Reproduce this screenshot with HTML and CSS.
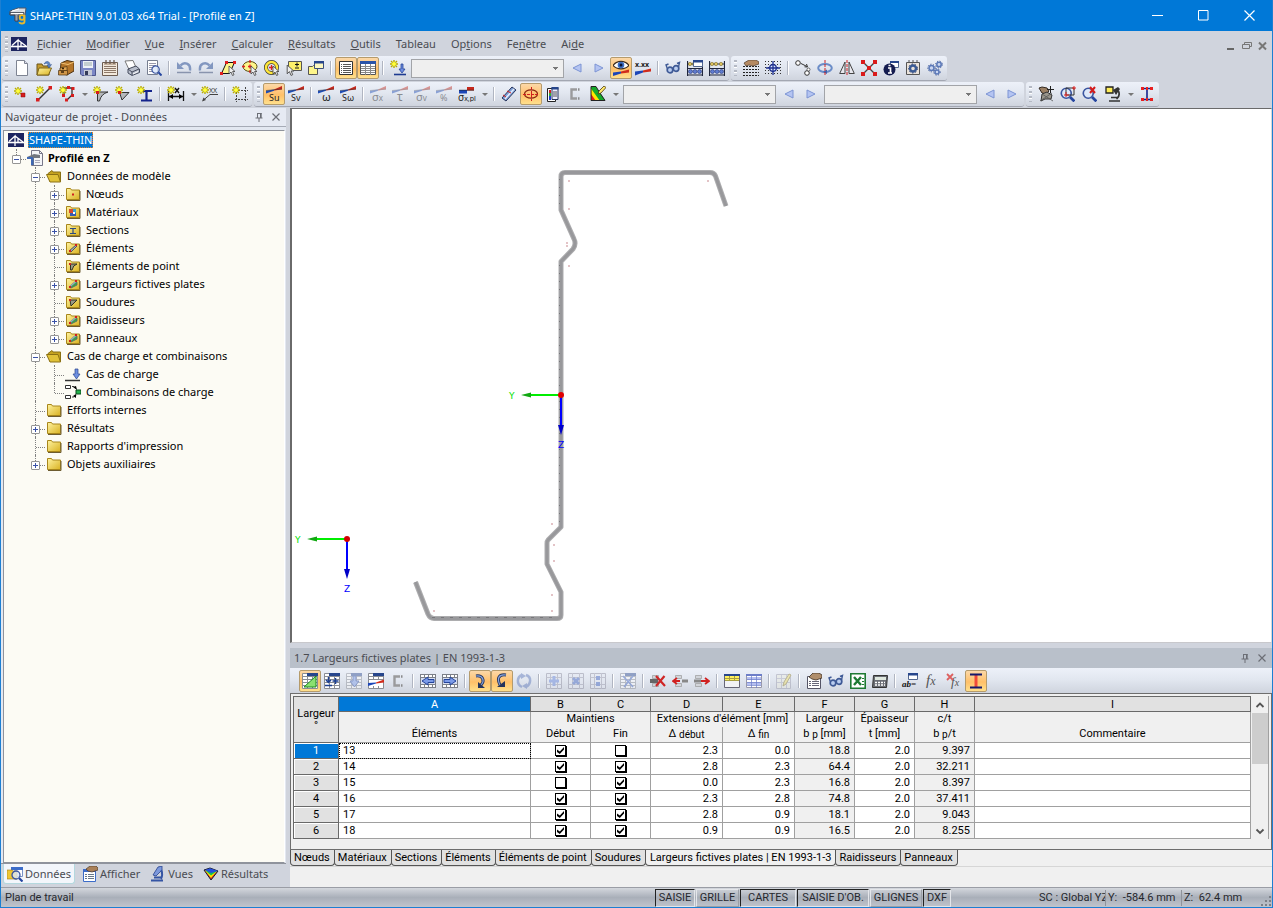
FILE: index.html
```html
<!DOCTYPE html>
<html lang="fr">
<head>
<meta charset="utf-8">
<title>SHAPE-THIN 9.01.03 x64 Trial - [Profilé en Z]</title>
<link rel="stylesheet" href="styles.css">
</head>
<body>
<svg class="defs" aria-hidden="true">
  <defs>
    <linearGradient id="gFold" x2="1" y2="1"><stop offset="0" stop-color="#fff3a0"/><stop offset="1" stop-color="#d9b222"/></linearGradient>
  </defs>
  <symbol id="star" viewBox="0 0 8 8"><path d="M4 0v8M0 4h8M1 1l6 6M7 1l-6 6" stroke="#b8ac00" stroke-width="1.4"/><circle cx="4" cy="4" r="2" fill="#ffff3a"/></symbol>
  <symbol id="cursor" viewBox="0 0 8 10"><path d="M1 0v8l2-2 1.500 3.500 1.500-.7L4.600 5.500H7z" fill="#eee" stroke="#444" stroke-width=".8"/></symbol>
  <symbol id="wedge" viewBox="0 0 18 8"><path d="M1 7.500V4.800L9 3.500v1.200z" fill="#1f4cb4"/><path d="M9 3.500L17 0v3.500L9 4.500z" fill="#c5281c"/><path d="M1 4.500L17 3" stroke="#333" stroke-width=".5"/></symbol>
  <symbol id="tbl" viewBox="0 0 16 16"><path d="M.5.500h15v15H.5z" fill="#fff" stroke="#8a8d94"/><path d="M.5 3.500h15M.5 6.500h15M.5 9.500h15M.5 12.500h15M5.500 3v13M10.500 3v13" stroke="#8a8d94"/><path d="M5 0h11v3H5z" fill="#27468c"/></symbol>
  <symbol id="film" viewBox="0 0 16 16"><path d="M0 1h16v14H0z" fill="#7c8088"/><path d="M1 2h3v2H1zM5 2h3v2H5zM9 2h3v2H9zM13 2h2v2h-2zM1 12h3v2H1zM5 12h3v2H5zM9 12h3v2H9zM13 12h2v2h-2z" fill="#fff"/><path d="M1 5h14v6H1z" fill="#d5ddf0"/></symbol>
  <symbol id="mag" viewBox="0 0 12 12"><path d="M8 8l3.500 3.500" stroke="#2646a0" stroke-width="2.200"/><circle cx="5" cy="5" r="4" fill="#dce9fb" fill-opacity=".8" stroke="#3a55a0" stroke-width="1.300"/></symbol>

  <symbol id="bridge" viewBox="0 0 16 14"><path d="M0 0h16v14H0z" fill="#1d2560"/><path d="M0 9.500h16" stroke="#fff" stroke-width="1.600"/><path d="M1 8.500L7 3v10M7 3l8 6M10 5v4" stroke="#fff" fill="none" stroke-width="1.300"/></symbol>
  <symbol id="new" viewBox="0 0 16 16"><path d="M2.500.5h8l3 3v12h-11z" fill="#fff" stroke="#7e8492"/><path d="M10.500.5v3h3" fill="#dde" stroke="#7e8492"/></symbol>
  <symbol id="open" viewBox="0 0 16 16"><path d="M1 4h5l1 2h6v9H1z" fill="#c69c2e" stroke="#6b5518"/><path d="M3 8h12.500l-3 7H1z" fill="url(#gFold)" stroke="#7d651a"/><path d="M8 4c2-4 6-3 6 1l1.500-.5L13 8l-2-3h1.500C12 3 10 3 8 4z" fill="#5a86c8" stroke="#2b4c86" stroke-width=".5"/></symbol>
  <symbol id="cabinet" viewBox="0 0 16 16"><path d="M3 3l6-2.500 7 1.500v9l-7 4-7-2z" fill="#b5762a" stroke="#4a3010"/><path d="M3 3l7 1.500 6-2.500" stroke="#f2c377" fill="none"/><path d="M2 8l7-1.500v4H2z" fill="#e0a552" stroke="#4a3010" stroke-width=".7"/><path d="M.5 10.500h9v4.500h-9z" fill="#d09648" stroke="#4a3010" stroke-width=".7"/><path d="M3 12h3M4 8.500h2" stroke="#3a2408" stroke-width="1.300"/></symbol>
  <symbol id="save" viewBox="0 0 16 16"><path d="M.5.5h15v15H2l-1.500-1.500z" fill="#7c87c6" stroke="#4d568c"/><path d="M3 1h10v7H3z" fill="#eef1f7"/><path d="M4 3h8M4 5h8" stroke="#9aa"/><path d="M4 10h8v5.500H4z" fill="#c6cad6"/><path d="M5 11h3v4H5z" fill="#333a58"/></symbol>
  <symbol id="notes" viewBox="0 0 16 16"><path d="M.5 2.500h15v13H.5z" fill="#f3e9dc" stroke="#6d5c50"/><path d="M2 6.500h12M2 8.500h12M2 10.500h12M2 12.500h12" stroke="#8d7868"/><path d="M2 4h12" stroke="#b39b86" stroke-width="1.500"/><path d="M4 0v4M8 0v4M12 0v4" stroke="#6d5c50" stroke-width="1.300"/></symbol>
  <symbol id="print" viewBox="0 0 16 16"><path d="M1 1l8-.5 3 7-7 2z" fill="#fff" stroke="#777"/><path d="M4 9l8-3 3.500 3v3.500L8 15.500 4 13z" fill="#b9bfcc" stroke="#454b5c"/><path d="M4 9l4 3 7-3M8 12v3" stroke="#454b5c" fill="none"/><path d="M9 14l5-2.500" stroke="#fff"/></symbol>
  <symbol id="preview" viewBox="0 0 16 16"><path d="M1.500.5h10v14h-10z" fill="#fff" stroke="#777f90"/><path d="M3 3.500h7M3 5.500h7M3 7.500h4M3 9.500h3M3 11.500h3" stroke="#99a"/><use href="#mag" x="5" y="5" width="11" height="11"/></symbol>
  <symbol id="undo" viewBox="0 0 16 16"><path d="M4.500 5.500C8 1.500 15 3 14 10.500" fill="none" stroke="#8297c0" stroke-width="2.400"/><path d="M1 2v7h7z" fill="#8297c0"/><path d="M1 12.500h14" stroke="#8994ad" stroke-width="1.500"/></symbol>
  <symbol id="redo" viewBox="0 0 16 16"><path d="M11.500 5.500C8 1.500 1 3 2 10.500" fill="none" stroke="#8297c0" stroke-width="2.400"/><path d="M15 2v7H8z" fill="#8297c0"/><path d="M1 12.500h14" stroke="#8994ad" stroke-width="1.500"/></symbol>
  <symbol id="selRect" viewBox="0 0 16 16"><path d="M1.500 13.500l5-11h8l-5 11z" fill="#fdf58a" stroke="#111"/><path d="M5 1h3v3H5zM13 1h3v3h-3zM0 12h3v3H0z" fill="#e02020"/><use href="#cursor" x="8" y="6" width="8" height="10"/></symbol>
  <symbol id="selEll" viewBox="0 0 16 16"><ellipse cx="8" cy="6.500" rx="7" ry="5" fill="#fdf58a" stroke="#5a4a10"/><path d="M8 4.500v4M6 6.500h4M0 6.500h3M8 0v3M8 10v3" stroke="#e02020" stroke-width="1.300"/><use href="#cursor" x="8" y="6" width="8" height="10"/></symbol>
  <symbol id="selRing" viewBox="0 0 16 16"><circle cx="7.500" cy="7.500" r="5.500" fill="none" stroke="#333" stroke-width="4"/><circle cx="7.500" cy="7.500" r="5.500" fill="none" stroke="#ffe73a" stroke-width="2.600"/><path d="M7.500 5v5M5 7.500h5" stroke="#e02020" stroke-width="1.300"/><use href="#cursor" x="8" y="6" width="8" height="10"/></symbol>
  <symbol id="selPlus" viewBox="0 0 16 16"><path d="M2.500 1.500h13v9h-13z" fill="#fdf06a" stroke="#555"/><path d="M11 2.500v4M9 4.500h4M9 8h4" stroke="#111"/><use href="#cursor" x="0" y="5" width="9" height="11"/></symbol>
  <symbol id="selWin" viewBox="0 0 16 16"><path d="M.5 6.500h4l1-1h4v9h-9z" fill="#fdf58a" stroke="#555"/><path d="M6.500 1.500h9v7h-9z" fill="#fdf8c0" stroke="#3c4f7c"/><path d="M6 1h10v2.500H6z" fill="#27468c"/></symbol>
  <symbol id="list" viewBox="0 0 16 16"><path d="M1.500 1.500h13v13h-13z" fill="#fff" stroke="#333"/><path d="M3 4.500h1M3 6.500h1M3 8.500h1M3 10.500h1M3 12.500h1M5 4.500h8M5 6.500h8M5 8.500h8M5 10.500h8M5 12.500h8" stroke="#555"/></symbol>
  <symbol id="table" viewBox="0 0 16 16"><path d="M.5 1.500h15v13H.5z" fill="#fff" stroke="#555"/><path d="M0 1h16v3H0z" fill="#2b54a8"/><path d="M1 6.500h14M1 8.500h14M1 10.500h14M1 12.500h14M5.500 4v11M10.500 4v11" stroke="#888"/></symbol>
  <symbol id="loadNew" viewBox="0 0 16 16"><use href="#star" width="8" height="8"/><path d="M11 4v5H9l3 4 3-4h-2V4z" fill="#6d8ce0" stroke="#24449a" stroke-width=".8"/><path d="M4 14.500h12" stroke="#1d3a90" stroke-width="1.600" fill="none"/></symbol>
  <symbol id="prev" viewBox="0 0 16 16"><path d="M12 4v8L4 8z" fill="#b4c4f2" stroke="#7c94d4"/></symbol>
  <symbol id="next" viewBox="0 0 16 16"><path d="M4 4v8l8-4z" fill="#b4c4f2" stroke="#7c94d4"/></symbol>
  <symbol id="eye" viewBox="0 0 16 16"><path d="M0 5.500C4 0 12 0 16 5.500 12 10 4 10 0 5.500z" fill="#fff" stroke="#3b2a1c" stroke-width="1.200"/><circle cx="8" cy="5" r="3.300" fill="#3a6cc0"/><circle cx="8" cy="5" r="1.500" fill="#0a1230"/><path d="M0 16v-3.500l8-1v2z" fill="#1c46b8"/><path d="M8 13.500v-2l8-2v3z" fill="#d02c1c"/></symbol>
  <symbol id="glasses" viewBox="0 0 16 16"><circle cx="5" cy="10" r="2.800" fill="#b9cdf0" stroke="#3f5a96" stroke-width="1.700"/><circle cx="11" cy="8.500" r="2.800" fill="#b9cdf0" stroke="#3f5a96" stroke-width="1.700"/><path d="M2.500 9L1 5l2.500-1M13.500 7l1-4.500-2.500 1" stroke="#3f5a96" stroke-width="1.400" fill="none"/></symbol>
  <symbol id="abacus" viewBox="0 0 16 16"><path d="M.5 1v15M15.500 1v15M0 8.500h16M0 15h16M0 4h16" stroke="#20263c" stroke-width="1.200"/><g fill="#dcc25c" stroke="#6c5c20" stroke-width=".5"><circle cx="3" cy="4" r="1.700"/><circle cx="7" cy="4" r="1.700"/><circle cx="12" cy="4" r="1.700"/></g><g fill="#5f7cd0" stroke="#26387c" stroke-width=".6"><circle cx="3.500" cy="11.500" r="2"/><circle cx="8" cy="11.500" r="2"/><circle cx="12.500" cy="11.500" r="2"/></g></symbol>
  <symbol id="abacusWin" viewBox="0 0 16 16"><use href="#abacus" width="16" height="16"/><path d="M6.500.5h9v6h-9z" fill="#fff" stroke="#53678f"/><path d="M6 0h10v2.500H6z" fill="#27468c"/></symbol>
  <symbol id="dots" viewBox="0 0 16 16"><path d="M0 1.500h16M0 4.500h16M0 7.500h16M0 10.500h16M0 13.500h16" stroke="#333" stroke-dasharray="1 2"/></symbol>
  <symbol id="gridHand" viewBox="0 0 16 16"><path d="M0 6.500h16M0 9.500h16M0 12.500h16M0 15.500h16" stroke="#222" stroke-dasharray="2 1"/><path d="M1 3l5-3h7l3 2v2l-6 2-4-1-3 1z" fill="#b58a62" stroke="#4c3a2a" stroke-width=".7"/></symbol>
  <symbol id="gridSnap" viewBox="0 0 16 16"><use href="#dots" width="16" height="16"/><circle cx="8" cy="8" r="3.300" fill="#dfe8ff" stroke="#1c2f90" stroke-width="1.300"/><path d="M8 1v14M1 8h14" stroke="#1c2f90" stroke-width="1.300"/></symbol>
  <symbol id="move" viewBox="0 0 16 16"><circle cx="3" cy="3" r="2.300" fill="#fff" stroke="#333"/><circle cx="12" cy="13" r="2.300" fill="#fff" stroke="#333"/><circle cx="13.500" cy="9.500" r="1.500" fill="#fff" stroke="#333" stroke-width=".7"/><path d="M6 3.500l6 3M12.500 7l-3-.2M12.500 7l-1-3" stroke="#333" fill="none"/></symbol>
  <symbol id="rotate" viewBox="0 0 16 16"><ellipse cx="8" cy="8" rx="6.800" ry="4" fill="none" stroke="#6a8cc8" stroke-width="2"/><path d="M10 9.500l-4 2.500 4 2z" fill="#3f64b0"/><path d="M8 0v16" stroke="#d02020" stroke-dasharray="3 1"/></symbol>
  <symbol id="mirror" viewBox="0 0 16 16"><path d="M6 2v11.500H.7zM10 2v11.500h5.300z" fill="#e8e8ee" stroke="#444"/><path d="M8 0v16" stroke="#d02020" stroke-dasharray="3 1"/></symbol>
  <symbol id="cross" viewBox="0 0 16 16"><path d="M2 2l12 12M14 2L2 14" stroke="#444" stroke-width="1.400"/><path d="M0 0h4v4H0zM12 0h4v4h-4zM0 12h4v4H0zM12 12h4v4h-4zM6 6h4v4H6z" fill="#da1a1a"/></symbol>
  <symbol id="info" viewBox="0 0 16 16"><path d="M7.500 1.500h8v6h-8z" fill="#fff" stroke="#53678f"/><path d="M7 1h9v2H7z" fill="#27468c"/><circle cx="6.500" cy="9.500" r="6" fill="#141c50"/><path d="M5 8h2.500v5M5 13h4M5.500 5.500h2" stroke="#fff" stroke-width="1.700" fill="none"/></symbol>
  <symbol id="gearNote" viewBox="0 0 16 16"><path d="M1.500 2.500h13v12h-13z" fill="#e9e2da" stroke="#555"/><path d="M4 0v3M8 0v3M12 0v3" stroke="#555"/><circle cx="8" cy="8.500" r="3" fill="none" stroke="#3a5a94" stroke-width="2.400"/><circle cx="8" cy="8.500" r="4.500" fill="none" stroke="#2d4270" stroke-dasharray="1.500 1.700"/></symbol>
  <symbol id="gears" viewBox="0 0 16 16"><g fill="#c9d6f0" stroke="#5a78b8" stroke-width="1.500"><circle cx="4.500" cy="8" r="2.500"/><circle cx="12" cy="4.500" r="2.200"/><circle cx="10" cy="12" r="2"/></g><g fill="none" stroke="#3f5a9a" stroke-dasharray="1.200 1.500"><circle cx="4.500" cy="8" r="3.800"/><circle cx="12" cy="4.500" r="3.400"/><circle cx="10" cy="12" r="3.200"/></g></symbol>

  <symbol id="nNode" viewBox="0 0 16 16"><use href="#star" width="8" height="8" y="1"/><path d="M7 7h4v4H7z" fill="#d81e1e" stroke="#8a0c0c" stroke-width=".5"/></symbol>
  <symbol id="nLine" viewBox="0 0 16 16"><use href="#star" width="8" height="8"/><path d="M2 14L14 2" stroke="#333" stroke-width="1.400"/><path d="M12.500 0H16v3.500h-3.500zM0 12h3.500v3.500H0z" fill="#d81e1e"/></symbol>
  <symbol id="nPoly" viewBox="0 0 16 16"><path d="M5 9V2h8v7l-5 5" stroke="#333" stroke-width="1.300" fill="none"/><use href="#star" width="8" height="8"/><path d="M8 0h3v3H8zM12.500 1h3v3h-3zM12 8h3v3h-3zM6 12.500h3v3H6zM3 8h3v3H3z" fill="#d81e1e"/></symbol>
  <symbol id="nCorner" viewBox="0 0 16 16"><path d="M4.500 15V6H15Q8 8 6.500 15z" fill="#b4b7bc" stroke="#333"/><use href="#star" width="8" height="8"/><path d="M3 5h3v3H3z" fill="#d81e1e"/></symbol>
  <symbol id="nWeld" viewBox="0 0 16 16"><path d="M4.500 6.500H14l-7 7.500z" fill="#b4b7bc" stroke="#333"/><use href="#star" width="8" height="8"/><path d="M3 5h3v3H3z" fill="#d81e1e"/></symbol>
  <symbol id="nBeam" viewBox="0 0 16 16"><path d="M4 5h11M4 14.500h11M9.500 5v10" stroke="#14248c" stroke-width="2.200"/><use href="#star" width="8" height="8"/></symbol>
  <symbol id="nGrid" viewBox="0 0 16 16"><path d="M3 4.500h13M3 13.500h13M4.500 3v13M13.500 1v15" stroke="#444" stroke-dasharray="2 1"/><use href="#star" width="8" height="8"/></symbol>
  <symbol id="plates" viewBox="0 0 16 16"><path d="M1 12L11 1l4 3L5 15z" fill="#7fa0d6" stroke="#26345c"/><path d="M4 13L13 3" stroke="#e7efff" stroke-width="1.500"/><path d="M2 9l3 2M6 5l4 2" stroke="#d02020"/></symbol>
  <symbol id="ellDim" viewBox="0 0 16 16"><ellipse cx="8" cy="8" rx="6.500" ry="4.200" fill="none" stroke="#8a2510" stroke-width="1.200"/><path d="M0 8.500h16M8.500 1v14" stroke="#d02020" stroke-dasharray="3 1"/></symbol>
  <symbol id="legend" viewBox="0 0 16 16"><path d="M2.500 2.500h8v13h-8z" fill="#fff" stroke="#222"/><path d="M4 4h2v3H4z" fill="#d02020"/><path d="M4 7h2v3H4z" fill="#30b030"/><path d="M4 10h2v4H4z" fill="#2040d0"/><path d="M7 1.500h6v12H7z" fill="#eef" stroke="#26345c"/><path d="M6.500 1h7v2.500h-7z" fill="#27468c"/><path d="M8 6h4M8 8h4M8 10h4" stroke="#555"/></symbol>
  <symbol id="channel" viewBox="0 0 16 16"><path d="M10 3.500H4.500v9H10" fill="none" stroke="#9a9a9c" stroke-width="2.400"/><path d="M11 3.500h1.500M11 12.500h1.500" stroke="#8a8a8c" stroke-width="2.400"/></symbol>
  <symbol id="rainbow" viewBox="0 0 16 16"><path d="M1 1h5l9 13v1H1z" fill="#16a82c"/><path d="M1 2.500L10 15H1z" fill="#ffe800"/><path d="M1 8l5 7H1z" fill="#e32020"/><path d="M1 .5h5l3 5 6 9H1z" fill="none" stroke="#222"/><path d="M8 8l1-3 5-5 2 1.500-5 5.500z" fill="#ffe86a" stroke="#4b3a10" stroke-width=".8"/></symbol>
  <symbol id="handDia" viewBox="0 0 16 16"><path d="M1 2l3-1 5 1 2 3-3 3-4-1z" fill="#9b8064" stroke="#332a22"/><path d="M12.500 0v7M9 3.500h7" stroke="#222"/><path d="M4 8l5-2 5 3-1 4H7L3 15z" fill="#9a968c" stroke="#333"/><path d="M2 15l12-8M4 8l11 7" stroke="#555" stroke-width=".8"/></symbol>
  <symbol id="zoomWin" viewBox="0 0 16 16"><use href="#mag" width="15" height="15" x="0" y="1"/><path d="M6 2h8v7H6z" fill="none" stroke="#333"/><path d="M6 6v5M4 9h5M14 0v4M12 2h4" stroke="#e02020"/></symbol>
  <symbol id="zoomX" viewBox="0 0 16 16"><use href="#mag" width="15" height="15" y="1"/><path d="M8 1l5 6M13 1L8 7" stroke="#d41c1c" stroke-width="2"/></symbol>
  <symbol id="scope" viewBox="0 0 16 16"><path d="M8 4l5-3 2 2-4 6z" fill="#333"/><path d="M13.500 5q2 5-2 8M4 15h11M6 11.500h7" stroke="#333" stroke-width="1.700" fill="none"/><path d="M1 1h7v6H1z" fill="#ffee58" stroke="#222" stroke-width="1.300"/></symbol>
  <symbol id="nodesI" viewBox="0 0 16 16"><path d="M2 2.500h12M2 13.500h12M8 2.500v11" stroke="#14248c" stroke-width="1.600"/><path d="M2 2.500h3M7 2.500h2M11 2.500h3M2 13.500h3M7 13.500h2M11 13.500h3" stroke="#e82020" stroke-width="3"/></symbol>

  <symbol id="folder" viewBox="0 0 16 16"><path d="M1.500 2.500h4l1 1.500h8v9.500h-13z" fill="url(#gFold)" stroke="#a8861a"/><path d="M2 14.500h13V5" stroke="#6d5c30" fill="none"/></symbol>
  <symbol id="folderOpen" viewBox="0 0 16 16"><path d="M2 5.500l4-3 1 1.500h7.500v9.500H4z" fill="#c5a220" stroke="#8a7012"/><path d="M.5 6.500H12l2.500 7.500H4z" fill="#e0c138" stroke="#8b7114"/></symbol>
  <symbol id="fNode" viewBox="0 0 16 16"><use href="#folder" width="16" height="16"/><path d="M7 7.500h2v2H7z" fill="#d02020"/></symbol>
  <symbol id="fMat" viewBox="0 0 16 16"><use href="#folder" width="16" height="16"/><path d="M4 5h4v4H4z" fill="#d84a30"/><path d="M8 5h3v4H8z" fill="#3aa0d0"/><path d="M5 9h6v3H5z" fill="#365ab0"/><path d="M8 8h2v2H8z" fill="#fff"/></symbol>
  <symbol id="fSec" viewBox="0 0 16 16"><use href="#folder" width="16" height="16"/><path d="M5 6.500h6M5 11.500h6M8 6v5" stroke="#2a4a80" stroke-width="1.200"/></symbol>
  <symbol id="fEl" viewBox="0 0 16 16"><use href="#folder" width="16" height="16"/><path d="M4 11l7-6 1 1-6 6z" fill="#9ab" stroke="#555"/><path d="M10 4h2v2h-2zM4 10h2v2H4z" fill="#d02020"/></symbol>
  <symbol id="fPt" viewBox="0 0 16 16"><use href="#folder" width="16" height="16"/><path d="M5.500 12V6H12Q8 7 7 12z" fill="#998" stroke="#332"/><path d="M4 5h2v2H4z" fill="#d02020"/></symbol>
  <symbol id="fWeld" viewBox="0 0 16 16"><use href="#folder" width="16" height="16"/><path d="M5 6h7l-6 6z" fill="#998" stroke="#332"/><path d="M4 5h2v2H4z" fill="#d02020"/></symbol>
  <symbol id="fGr" viewBox="0 0 16 16"><use href="#folder" width="16" height="16"/><path d="M4 11l7-6 1 1v3l-6 3z" fill="#3aa050" stroke="#566" stroke-width=".8"/><path d="M5 10.500l6-5" stroke="#9ab" stroke-width="1.500"/><path d="M10 4h2v2h-2zM4 10h2v2H4z" fill="#d02020"/></symbol>
  <symbol id="docBeam" viewBox="0 0 16 16"><path d="M4.500.5h8l3 3v12h-11z" fill="#f4f5f8" stroke="#778"/><path d="M12.500.5v3h3" stroke="#778" fill="none"/><path d="M8 10.500h5M8 12.500h5" stroke="#aab"/><path d="M0 7l7-3 6 1v3H7v7H4V9H0z" fill="#72767e"/><path d="M0 7h6v2H0zM4 8h2.500v7H4z" fill="#3f68b4"/></symbol>
  <symbol id="load" viewBox="0 0 16 16"><path d="M10 3h3v5h2l-3.500 5L8 8h2z" fill="#6f90e0" stroke="#2a468c" stroke-width=".7"/><path d="M0 14.500h15" stroke="#333" stroke-width="1.500"/></symbol>
  <symbol id="combi" viewBox="0 0 16 16"><path d="M.5 1.500h5v3h-5zM.5 11.500h5v3h-5z" fill="#fff" stroke="#333"/><path d="M7 2.500h1c2 0 3 1 3 3M7 13h1c2 0 3-1 3-3" fill="none" stroke="#333" stroke-dasharray="2 1"/><path d="M11 6h5v4h-5z" fill="#22b24a" stroke="#0c4a1c"/><path d="M8 3l4 3-1-4zM8 12l3 2 0-4z"/></symbol>
  <symbol id="navData" viewBox="0 0 16 16"><path d="M4.500 1.500h11v9h-11z" fill="#fff" stroke="#7a94c8"/><path d="M4 1h12v3H4z" fill="#3c6cc8"/><path d="M0 4h5l1 1h4v8H0z" fill="#efc734" stroke="#a07c10" stroke-width=".6"/><use href="#mag" x="4" y="4" width="12" height="12"/></symbol>
  <symbol id="navShow" viewBox="0 0 16 16"><path d="M1.500 3.500h12v12h-12z" fill="#fff" stroke="#3c6cc8"/><path d="M1 3h13v3H1z" fill="#3c6cc8"/><path d="M3 8.500h2M3 10.500h2M3 12.500h2M6 8.500h6M6 10.500h6M6 12.500h6" stroke="#678"/><path d="M4 3l4-3h6l2 2v2l-6 2-4-1z" fill="#a98058" stroke="#4c3a2a" stroke-width=".7"/></symbol>
  <symbol id="navView" viewBox="0 0 16 16"><path d="M8 1l4-1v4l-6 6-3-1z" fill="#7c98dc" stroke="#24408c" stroke-width=".8"/><path d="M1 14.500h12M4 11.500h7M11.500 4q1.500 5-.5 9" stroke="#3454a4" stroke-width="2" fill="none"/></symbol>
  <symbol id="navRes" viewBox="0 0 16 16"><path d="M1 4l6-2 8 3-7 9z" fill="#e02020" stroke="#123"/><path d="M2 4.500l12 .5-6 7z" fill="#ffe800"/><path d="M2 4.200l12 .8-6 4.500z" fill="#18c050"/><path d="M2 4l5-1.800L15 5 8 7z" fill="#2050e0"/></symbol>

  <symbol id="tTri" viewBox="0 0 16 16"><use href="#tbl" width="16" height="16"/><path d="M2 14L14 3v11z" fill="#8be070" stroke="#1c8a20"/></symbol>
  <symbol id="tAdd" viewBox="0 0 16 16"><use href="#tbl" width="16" height="16"/><path d="M4.500 4v5M2 7l2.500 2.500L7 7M11.500 5v6M8.500 8h6M1 12.500h7" stroke="#1c3f90" stroke-width="1.500" fill="none"/></symbol>
  <symbol id="tDown" viewBox="0 0 16 16"><use href="#tbl" width="16" height="16"/><path d="M7 3h3v5h3l-4.500 6L4 8h3z" fill="#7b9be8" stroke="#24449a"/></symbol>
  <symbol id="tRes" viewBox="0 0 16 16"><use href="#tbl" width="16" height="16"/><path d="M1 7h14v6H1z" fill="#fff"/><path d="M0 13v-3l8-.5v1z" fill="#1c46b8"/><path d="M8 9.500l8-3v3l-8 1z" fill="#d02c1c"/></symbol>
  <symbol id="fLeft" viewBox="0 0 16 16"><use href="#film" width="16" height="16"/><path d="M14 6.500H8V4L2 8l6 4V9.500h6z" fill="#7b9be8" stroke="#24449a"/></symbol>
  <symbol id="fRight" viewBox="0 0 16 16"><use href="#film" width="16" height="16"/><path d="M2 6.500h6V4l6 4-6 4V9.500H2z" fill="#7b9be8" stroke="#24449a"/></symbol>
  <symbol id="curl1" viewBox="0 0 16 16"><path d="M4 3c7-1 9 5 5 9" stroke="#26345c" stroke-width="3" fill="none"/><path d="M4 3c7-1 9 5 5 9" stroke="#86a4dc" stroke-width="1.200" fill="none"/><path d="M6 9v6h7z" fill="#26345c"/></symbol>
  <symbol id="curl2" viewBox="0 0 16 16"><path d="M12 2C4 1 3 6 6 12" stroke="#26345c" stroke-width="3" fill="none"/><path d="M12 2C4 1 3 6 6 12" stroke="#86a4dc" stroke-width="1.200" fill="none"/><path d="M3 14h8V8z" fill="#26345c"/></symbol>
  <symbol id="refresh" viewBox="0 0 16 16"><path d="M6 14C0 11 1 4 6 2M10 2c6 2 5 9 0 12" stroke="#5b76b8" stroke-width="2.500" fill="none"/><path d="M5 0l5 3-5 3zM11 10l-5 3 5 3z" fill="#5b76b8"/></symbol>
  <symbol id="tPlus" viewBox="0 0 16 16"><path d="M.5.500h15v15H.5z" fill="#e4e8f2" stroke="#889"/><path d="M.5 4.500h15M.5 11.500h15M4.500 0v16M11.500 0v16" stroke="#99a"/><path d="M6.500 3h3v3.500H13v3H9.500V13h-3V9.500H3v-3h3.500z" fill="#5f80d8"/></symbol>
  <symbol id="tX" viewBox="0 0 16 16"><path d="M.5.500h15v15H.5z" fill="#e4e8f2" stroke="#889"/><path d="M.5 4.500h15M.5 11.500h15M4.500 0v16M11.500 0v16" stroke="#99a"/><path d="M5 5l6 6M11 5l-6 6" stroke="#3f62c0" stroke-width="3"/></symbol>
  <symbol id="tDiv" viewBox="0 0 16 16"><path d="M.5.500h15v15H.5z" fill="#e4e8f2" stroke="#889"/><path d="M.5 4.500h15M.5 11.500h15M4.500 0v16M11.500 0v16" stroke="#99a"/><path d="M6 3h4v4H6zM6 9h4v4H6z" fill="#3f62c0"/></symbol>
  <symbol id="tClr" viewBox="0 0 16 16"><use href="#tbl" width="16" height="16"/><path d="M3 3l10 11M13 3L4 14" stroke="#3f62c0" stroke-width="1.600"/></symbol>
  <symbol id="rDel" viewBox="0 0 16 16"><path d="M2.500 2.500h6v3h-6zM2.500 10.500h6v3h-6z" fill="#d2d5da" stroke="#999" stroke-width=".7"/><path d="M0 6h8v4H0z" fill="#666"/><path d="M6 3l9 10M14.500 3L6 13" stroke="#cf2626" stroke-width="2.200"/></symbol>
  <symbol id="rIns" viewBox="0 0 16 16"><path d="M3.500 2.500h6v3h-6zM3.500 10.500h6v3h-6z" fill="#d2d5da" stroke="#999" stroke-width=".7"/><path d="M10 6.500h6v3h-6z" fill="#888"/><path d="M8 8H2M5 5L1 8l4 3" stroke="#d02020" stroke-width="1.800" fill="none"/></symbol>
  <symbol id="rOut" viewBox="0 0 16 16"><path d="M1.500 2.500h6v3h-6zM1.500 10.500h6v3h-6z" fill="#d2d5da" stroke="#999" stroke-width=".7"/><path d="M0 6.500h7v3H0z" fill="#888"/><path d="M7 8h7M11 5l4 3-4 3" stroke="#d02020" stroke-width="1.800" fill="none"/></symbol>
  <symbol id="tYel" viewBox="0 0 16 16"><path d="M.5 1.500h15v13H.5z" fill="#f2f3f6" stroke="#667"/><path d="M1 3h14v5H1z" fill="#fff15c"/><path d="M0 1h16v2H0z" fill="#27468c"/><path d="M1 7.500h14M1 5.500h14M5.500 3v5M10.500 3v5" stroke="#a9a040"/></symbol>
  <symbol id="tBlu" viewBox="0 0 16 16"><path d="M.5 1.500h15v13H.5z" fill="#fff" stroke="#99a"/><path d="M1 4h14v3H1zM1 9h14v3H1z" fill="#b5bff0"/><path d="M0 1h16v2H0z" fill="#6d7ec8"/><path d="M1 6.500h14M1 9.500h14M1 12.500h14M5.500 3v12M10.500 3v12" stroke="#6d7ec8" stroke-width=".7"/></symbol>
  <symbol id="tPen" viewBox="0 0 16 16"><path d="M.5 1.500h14v14H.5z" fill="#eceddf" stroke="#99a"/><path d="M1 5.500h13M1 9.500h13M5.500 2v13M10.500 2v13" stroke="#aab"/><path d="M7 13l1-4 5-8 2 1-5 9z" fill="#f4e060" stroke="#8a7a28"/></symbol>
  <symbol id="props" viewBox="0 0 16 16"><path d="M1.500 3.500h13v12h-13z" fill="#fff" stroke="#556"/><path d="M3 8.500h2M3 10.500h2M3 12.500h2M6 8.500h7M6 10.500h7M6 12.500h7" stroke="#667"/><path d="M3 4l4-4h6l3 2v3l-6 2-4-1z" fill="#b08e6c" stroke="#3c2e22" stroke-width=".8"/></symbol>
  <symbol id="excel" viewBox="0 0 16 16"><path d="M.8.8h14.400v14.400H.8z" fill="#fff" stroke="#1e7a34" stroke-width="1.600"/><path d="M4 4l7 8M11 4l-7 8" stroke="#1e7a34" stroke-width="2.400"/><path d="M12 5.500h2M12 8.500h2M12 11.500h2" stroke="#1e7a34"/></symbol>
  <symbol id="calc" viewBox="0 0 16 16"><path d="M1.500 2.500h14l-1 12h-14z" fill="#6a6d74" stroke="#333"/><path d="M3 4h11v3H3z" fill="#dfe8df"/><path d="M3 9.500h10M3 12h10" stroke="#fff" stroke-width="1.300" stroke-dasharray="2 1"/></symbol>
  <symbol id="ibeam" viewBox="0 0 16 16"><path d="M8 2v12" stroke="#f04a3a" stroke-width="3"/><path d="M2 1.500h12M2 14.500h12" stroke="#14186c" stroke-width="1.800"/></symbol>

  <symbol id="pin" viewBox="0 0 10 10"><path d="M3 1.500h4.500M3.500 1.500v4.500M6.500 1v5M7.200 1v5M1.500 6h7M5 6v4" stroke="#6c6f76" fill="none"/></symbol>
  <symbol id="x" viewBox="0 0 10 10"><path d="M1.500 1.500l7 7M8.500 1.500l-7 7" stroke="#6c6f76" stroke-width="1.200"/></symbol>
</svg>

<div class="window">
  <header class="titlebar">
    <svg class="i18"><path d="M1 4l8-3h8l-1 8H9v5H6V8H1z" fill="#d8dce2" stroke="#4a5566"/><path d="M1 5.500h14v2.500H9v6H6V8H1z" fill="#9aa0aa" stroke="#3c4250" stroke-width=".8"/><path d="M3 4l7-2M2 6.500h12" stroke="#fff"/><circle cx="13" cy="10.500" r="2.300" fill="none" stroke="#e9b92c" stroke-width="1.800"/><path d="M15.500 8v6.500q0 2-2.500 2t-2.500-1.500" fill="none" stroke="#e9b92c" stroke-width="1.800"/></svg>
    <h1>SHAPE-THIN 9.01.03 x64 Trial - [Profilé en Z]</h1>
    <div class="caption">
      <button aria-label="Réduire"><svg class="i11"><path d="M0 5.500h11" stroke="#fff"/></svg></button>
      <button aria-label="Agrandir"><svg class="i11"><path d="M.5.5h9.500v9.500H.5z" stroke="#fff" fill="none"/></svg></button>
      <button aria-label="Fermer"><svg class="i11"><path d="M.5.5l10 10M10.500.5l-10 10" stroke="#fff" stroke-width="1.200"/></svg></button>
    </div>
  </header>

  <nav class="menubar">
    <span class="grip"></span>
    <svg class="menu-icon"><use href="#bridge"/></svg>
    <button><u>F</u>ichier</button><button><u>M</u>odifier</button><button><u>V</u>ue</button><button><u>I</u>nsérer</button><button><u>C</u>alculer</button><button><u>R</u>ésultats</button><button><u>O</u>utils</button><button>Tableau</button><button>Op<u>t</u>ions</button><button>Fe<u>n</u>être</button><button>Ai<u>d</u>e</button>
    <div class="mdi">
      <button aria-label="Réduire le document"><svg class="i10"><path d="M1 8h7" stroke="#666" stroke-width="2"/></svg></button>
      <button aria-label="Restaurer le document"><svg class="i10"><path d="M.5 3.500h7v4h-7zM2.500 3V1.500h7v4H8" stroke="#777" fill="none"/></svg></button>
      <button aria-label="Fermer le document"><svg class="i10"><path d="M1 1.500l7 7M8 1.500l-7 7" stroke="#777" stroke-width="2"/></svg></button>
    </div>
  </nav>

  <div class="bars">
    <div class="bar-row">
      <div class="bar" role="toolbar" aria-label="Standard">
        <span class="grip"></span>
        <button aria-label="Nouveau"><svg><use href="#new"/></svg></button>
        <button aria-label="Ouvrir"><svg><use href="#open"/></svg></button>
        <button aria-label="Gestionnaire"><svg><use href="#cabinet"/></svg></button>
        <button aria-label="Enregistrer"><svg><use href="#save"/></svg></button>
        <button aria-label="Données de base"><svg><use href="#notes"/></svg></button>
        <button aria-label="Imprimer"><svg><use href="#print"/></svg></button>
        <button aria-label="Aperçu"><svg><use href="#preview"/></svg></button>
        <i class="sep"></i>
        <button aria-label="Annuler"><svg><use href="#undo"/></svg></button>
        <button aria-label="Rétablir"><svg><use href="#redo"/></svg></button>
        <button aria-label="Sélection rhomboïde"><svg><use href="#selRect"/></svg></button>
        <button aria-label="Sélection ellipse"><svg><use href="#selEll"/></svg></button>
        <button aria-label="Sélection anneau"><svg><use href="#selRing"/></svg></button>
        <button aria-label="Ajouter à la sélection"><svg><use href="#selPlus"/></svg></button>
        <button aria-label="Sélection spéciale"><svg><use href="#selWin"/></svg></button>
        <i class="sep"></i>
        <button class="on" aria-label="Navigateur"><svg><use href="#list"/></svg></button>
        <button class="on" aria-label="Tableaux"><svg><use href="#table"/></svg></button>
        <i class="sep"></i>
        <button aria-label="Nouveau cas de charge"><svg><use href="#loadNew"/></svg></button>
        <select aria-label="Cas de charge"><option></option></select>
        <button aria-label="Précédent"><svg><use href="#prev"/></svg></button>
        <button aria-label="Suivant"><svg><use href="#next"/></svg></button>
        <button class="on" aria-label="Afficher les résultats"><svg><use href="#eye"/></svg></button>
        <button aria-label="Afficher les valeurs"><svg class="w"><text x="1" y="7" font-size="7" font-weight="bold" fill="#222">x.xx</text><path d="M1 15.500v-4l8-1v2z" fill="#1c46b8"/><path d="M9 12.500v-2l8-2v3z" fill="#d02c1c"/></svg></button>
        <i class="sep"></i>
        <button aria-label="Contrôle"><svg><use href="#glasses"/></svg></button>
        <button aria-label="Paramètres de calcul"><svg><use href="#abacusWin"/></svg></button>
        <button aria-label="Calculer tout"><svg><use href="#abacus"/></svg></button>
      </div>
      <div class="bar" role="toolbar" aria-label="Outils">
        <span class="grip"></span>
        <button aria-label="Paramètres de grille"><svg><use href="#gridHand"/></svg></button>
        <button aria-label="Accrochage"><svg><use href="#gridSnap"/></svg></button>
        <i class="sep"></i>
        <button aria-label="Déplacer"><svg><use href="#move"/></svg></button>
        <button aria-label="Rotation"><svg><use href="#rotate"/></svg></button>
        <button aria-label="Miroir"><svg><use href="#mirror"/></svg></button>
        <button aria-label="Connecter"><svg><use href="#cross"/></svg></button>
        <button aria-label="Informations"><svg><use href="#info"/></svg></button>
        <button aria-label="Options du modèle"><svg><use href="#gearNote"/></svg></button>
        <button aria-label="Configuration"><svg><use href="#gears"/></svg></button>
      </div>
    </div>
    <div class="bar-row">
      <div class="bar" role="toolbar" aria-label="Insérer">
        <span class="grip"></span>
        <button aria-label="Nouveau nœud"><svg><use href="#nNode"/></svg></button>
        <button aria-label="Nouvel élément"><svg><use href="#nLine"/></svg></button>
        <button class="split" aria-label="Polyligne"><svg><use href="#nPoly"/></svg></button>
        <button class="drop" aria-label="Plus de polylignes"></button>
        <button aria-label="Nouvel élément de point"><svg><use href="#nCorner"/></svg></button>
        <button aria-label="Nouvelle soudure"><svg><use href="#nWeld"/></svg></button>
        <button aria-label="Nouvelle section"><svg><use href="#nBeam"/></svg></button>
        <i class="sep"></i>
        <button class="split" aria-label="Cote"><svg class="w"><path d="M1.500 5v10M16.500 5v10M2 10.500h14" stroke="#111" stroke-width="1.300"/><path d="M2 10.500l4-2.500v5zM16 10.500l-4-2.500v5z"/><use href="#star" width="8" height="8"/><path d="M8 2l4 5M12 2L8 7" stroke="#111" stroke-width="1.400"/></svg></button>
        <button class="drop" aria-label="Plus de cotes"></button>
        <button aria-label="Commentaire"><svg class="w"><use href="#star" width="8" height="8"/><text x="8" y="7" font-size="7" fill="#333">XX</text><path d="M17 8.500H9l-7 6" stroke="#444" fill="none"/><path d="M1 15.500l1.500-4 2.500 2.500z" fill="#444"/></svg></button>
        <i class="sep"></i>
        <button aria-label="Lignes guides"><svg><use href="#nGrid"/></svg></button>
      </div>
      <div class="bar" role="toolbar" aria-label="Résultats">
        <span class="grip"></span>
        <button class="on" aria-label="Su"><svg class="w"><use href="#wedge" width="18" height="8"/><text x="4" y="15" font-size="9" fill="#222">Su</text></svg></button>
        <button aria-label="Sv"><svg class="w"><use href="#wedge" width="18" height="8"/><text x="4" y="15" font-size="9" fill="#222">Sv</text></svg></button>
        <i class="sep"></i>
        <button aria-label="Oméga"><svg class="w"><use href="#wedge" width="18" height="8"/><text x="5" y="15" font-size="11" fill="#222">ω</text></svg></button>
        <button aria-label="S oméga"><svg class="w"><use href="#wedge" width="18" height="8"/><text x="3" y="15" font-size="9" fill="#222">Sω</text></svg></button>
        <i class="sep"></i>
        <button disabled aria-label="Sigma x"><svg class="w"><use href="#wedge" width="18" height="8"/><text x="3" y="15" font-size="11" fill="#222">σ<tspan font-size="8">x</tspan></text></svg></button>
        <button disabled aria-label="Tau"><svg class="w"><use href="#wedge" width="18" height="8"/><text x="6" y="15" font-size="12" fill="#222">τ</text></svg></button>
        <button disabled aria-label="Sigma v"><svg class="w"><use href="#wedge" width="18" height="8"/><text x="3" y="15" font-size="11" fill="#222">σ<tspan font-size="8">v</tspan></text></svg></button>
        <button disabled aria-label="Ratio"><svg class="w"><use href="#wedge" width="18" height="8"/><text x="5" y="15" font-size="9" fill="#222">%</text></svg></button>
        <button class="split" aria-label="Sigma plastique"><svg class="w"><path d="M1 4h8v3.500H1z" fill="#1c46b8"/><path d="M9 1h7v3.500H9z" fill="#c5281c"/><path d="M1 4.200h15" stroke="#222" stroke-width=".6"/><text x="0" y="15" font-size="10" fill="#222">σ<tspan font-size="7">x,pl</tspan></text></svg></button>
        <button class="drop" aria-label="Plus de contraintes"></button>
        <i class="sep"></i>
        <button aria-label="Panneaux"><svg><use href="#plates"/></svg></button>
        <button class="on" aria-label="Ellipse d'inertie"><svg><use href="#ellDim"/></svg></button>
        <button aria-label="Légende"><svg><use href="#legend"/></svg></button>
        <button aria-label="Section efficace"><svg><use href="#channel"/></svg></button>
        <button class="split" aria-label="Échelle de couleurs"><svg><use href="#rainbow"/></svg></button>
        <button class="drop" aria-label="Plus de couleurs"></button>
        <select aria-label="Position x"><option></option></select>
        <button aria-label="Précédent"><svg><use href="#prev"/></svg></button>
        <button aria-label="Suivant"><svg><use href="#next"/></svg></button>
        <select aria-label="Section"><option></option></select>
        <button aria-label="Précédent"><svg><use href="#prev"/></svg></button>
        <button aria-label="Suivant"><svg><use href="#next"/></svg></button>
      </div>
      <div class="bar" role="toolbar" aria-label="Vue">
        <span class="grip"></span>
        <button aria-label="Déplacer la vue"><svg><use href="#handDia"/></svg></button>
        <button aria-label="Zoom fenêtre"><svg><use href="#zoomWin"/></svg></button>
        <button aria-label="Tout afficher"><svg><use href="#zoomX"/></svg></button>
        <button class="split" aria-label="Vues"><svg><use href="#scope"/></svg></button>
        <button class="drop" aria-label="Plus de vues"></button>
        <button aria-label="Nœuds visibles"><svg><use href="#nodesI"/></svg></button>
      </div>
    </div>
  </div>

  <main class="work">
    <aside class="navigator">
      <div class="pane-head">
        <h2>Navigateur de projet - Données</h2>
        <button aria-label="Masquer"><svg class="i10"><use href="#pin"/></svg></button>
        <button aria-label="Fermer le navigateur"><svg class="i10"><use href="#x"/></svg></button>
      </div>
      <div class="tree">
        <div class="node root"><svg><use href="#bridge"/></svg><span class="sel">SHAPE-THIN</span></div>
        <ul>
          <li><div class="node"><b class="box minus"></b><svg><use href="#docBeam"/></svg><strong>Profilé en Z</strong></div>
            <ul>
              <li><div class="node"><b class="box minus"></b><svg><use href="#folderOpen"/></svg><span>Données de modèle</span></div>
                <ul>
                  <li><div class="node"><b class="box plus"></b><svg><use href="#fNode"/></svg><span>Nœuds</span></div></li>
                  <li><div class="node"><b class="box plus"></b><svg><use href="#fMat"/></svg><span>Matériaux</span></div></li>
                  <li><div class="node"><b class="box plus"></b><svg><use href="#fSec"/></svg><span>Sections</span></div></li>
                  <li><div class="node"><b class="box plus"></b><svg><use href="#fEl"/></svg><span>Éléments</span></div></li>
                  <li><div class="node"><svg><use href="#fPt"/></svg><span>Éléments de point</span></div></li>
                  <li><div class="node"><b class="box plus"></b><svg><use href="#fGr"/></svg><span>Largeurs fictives plates</span></div></li>
                  <li><div class="node"><svg><use href="#fWeld"/></svg><span>Soudures</span></div></li>
                  <li><div class="node"><b class="box plus"></b><svg><use href="#fGr"/></svg><span>Raidisseurs</span></div></li>
                  <li><div class="node"><b class="box plus"></b><svg><use href="#fGr"/></svg><span>Panneaux</span></div></li>
                </ul>
              </li>
              <li><div class="node"><b class="box minus"></b><svg><use href="#folderOpen"/></svg><span>Cas de charge et combinaisons</span></div>
                <ul>
                  <li><div class="node"><svg><use href="#load"/></svg><span>Cas de charge</span></div></li>
                  <li><div class="node"><svg><use href="#combi"/></svg><span>Combinaisons de charge</span></div></li>
                </ul>
              </li>
              <li><div class="node"><svg><use href="#folder"/></svg><span>Efforts internes</span></div></li>
              <li><div class="node"><b class="box plus"></b><svg><use href="#folder"/></svg><span>Résultats</span></div></li>
              <li><div class="node"><svg><use href="#folder"/></svg><span>Rapports d'impression</span></div></li>
              <li><div class="node"><b class="box plus"></b><svg><use href="#folder"/></svg><span>Objets auxiliaires</span></div></li>
            </ul>
          </li>
        </ul>
      </div>
      <div class="nav-tabs" role="tablist">
        <button role="tab" class="active"><svg><use href="#navData"/></svg>Données</button>
        <button role="tab"><svg><use href="#navShow"/></svg>Afficher</button>
        <button role="tab"><svg><use href="#navView"/></svg>Vues</button>
        <button role="tab"><svg><use href="#navRes"/></svg>Résultats</button>
      </div>
    </aside>

    <div class="right">
      <section class="canvas" aria-label="Section">
        <svg class="drawing">
          <g fill="none" stroke-linejoin="round">
            <path d="M434 97L423.500 67Q422 63.500 418 63.500H273Q269 63.500 269 67.500V101L282 130Q284.500 135 281 140L269 152.500V418L256 431Q255 432 255 435V455L269 483V506Q269 509.500 265 509.500H142Q138 509.500 136 505L123.500 473" stroke="#adadaf" stroke-width="5"/>
            <path d="M434 97L423.500 67Q422 63.500 418 63.500H273Q269 63.500 269 67.500V101L282 130Q284.500 135 281 140L269 152.500V418L256 431Q255 432 255 435V455L269 483V506Q269 509.500 265 509.500H142Q138 509.500 136 505L123.500 473" stroke="#98989b" stroke-width="3"/>
            <path d="M267.500 70V100M267.500 156V417" stroke="#77777a" stroke-dasharray="1 7"/>
            <path d="M140 508.500h122" stroke="#77777a" stroke-dasharray="3 6"/>
          </g>
          <path d="M276 71h2v2h-2zM415 71h2v2h-2zM276 99h2v2h-2zM274 133h2v2h-2zM274 136h2v2h-2zM276 156h2v2h-2zM259 414h2v2h-2zM261 435h2v2h-2zM261 451h2v2h-2zM259 485h2v2h-2zM259 501h2v2h-2zM141 501h2v2h-2z" fill="#e3c3c6"/>
          <g>
            <path d="M269 286H236" stroke="#00ee00" stroke-width="2"/><path d="M229 286l10-2.500v5z" fill="#12a812"/>
            <path d="M269 286v34" stroke="#0000ff" stroke-width="2"/><path d="M269 326l-3-10h6z" fill="#0000c8"/>
            <circle cx="269" cy="286" r="3" fill="#e00000"/>
            <text x="217" y="290" class="ay">Y</text><text x="266" y="339" class="az">Z</text>
          </g>
          <g>
            <path d="M55 430H22" stroke="#00ee00" stroke-width="2"/><path d="M15 430l10-2.500v5z" fill="#12a812"/>
            <path d="M55 430v34" stroke="#0000ff" stroke-width="2"/><path d="M55 470l-3-10h6z" fill="#0000c8"/>
            <circle cx="55" cy="430" r="3" fill="#d00000"/>
            <text x="3" y="434" class="ay">Y</text><text x="52" y="483" class="az">Z</text>
          </g>
        </svg>
      </section>

      <section class="tables">
        <div class="pane-head gray">
          <h2>1.7 Largeurs fictives plates | EN 1993-1-3</h2>
          <button aria-label="Masquer"><svg class="i10"><use href="#pin"/></svg></button>
          <button aria-label="Fermer les tableaux"><svg class="i10"><use href="#x"/></svg></button>
        </div>
        <div class="bar wide" role="toolbar" aria-label="Tableau">
          <button class="on" aria-label="Synchroniser"><svg><use href="#tTri"/></svg></button>
          <button aria-label="Ajouter"><svg><use href="#tAdd"/></svg></button>
          <button disabled aria-label="Charger"><svg><use href="#tDown"/></svg></button>
          <button aria-label="Résultats"><svg><use href="#tRes"/></svg></button>
          <button aria-label="Section"><svg><use href="#channel"/></svg></button>
          <i class="sep"></i>
          <button aria-label="Tableau précédent"><svg><use href="#fLeft"/></svg></button>
          <button aria-label="Tableau suivant"><svg><use href="#fRight"/></svg></button>
          <i class="sep"></i>
          <button class="on" aria-label="Sélection vers tableau"><svg><use href="#curl1"/></svg></button>
          <button class="on" aria-label="Tableau vers sélection"><svg><use href="#curl2"/></svg></button>
          <button disabled aria-label="Actualiser"><svg><use href="#refresh"/></svg></button>
          <i class="sep"></i>
          <button disabled aria-label="Additionner"><svg><use href="#tPlus"/></svg></button>
          <button disabled aria-label="Multiplier"><svg><use href="#tX"/></svg></button>
          <button disabled aria-label="Diviser"><svg><use href="#tDiv"/></svg></button>
          <i class="sep"></i>
          <button disabled aria-label="Vider"><svg><use href="#tClr"/></svg></button>
          <i class="sep"></i>
          <button aria-label="Supprimer la ligne"><svg><use href="#rDel"/></svg></button>
          <button aria-label="Insérer une ligne"><svg><use href="#rIns"/></svg></button>
          <button aria-label="Retirer une ligne"><svg><use href="#rOut"/></svg></button>
          <i class="sep"></i>
          <button aria-label="Lignes colorées"><svg><use href="#tYel"/></svg></button>
          <button aria-label="Toutes les lignes"><svg><use href="#tBlu"/></svg></button>
          <i class="sep"></i>
          <button disabled aria-label="Modifier"><svg><use href="#tPen"/></svg></button>
          <i class="sep"></i>
          <button aria-label="Propriétés"><svg><use href="#props"/></svg></button>
          <button aria-label="Vérifier"><svg><use href="#glasses"/></svg></button>
          <button aria-label="Exporter vers Excel"><svg><use href="#excel"/></svg></button>
          <button aria-label="Calculatrice"><svg><use href="#calc"/></svg></button>
          <i class="sep"></i>
          <button aria-label="Paramètres"><svg class="w"><path d="M7.500.5h9v6h-9z" fill="#fff" stroke="#53678f"/><path d="M7 0h10v2.500H7z" fill="#27468c"/><text class="serif" x="1" y="14" font-size="9" font-weight="bold" font-style="italic" fill="#111">ab=</text></svg></button>
          <button aria-label="Formule"><svg class="w"><text class="serif" x="3" y="12" font-size="15" font-style="italic" fill="#555">f<tspan font-size="12">x</tspan></text></svg></button>
          <button aria-label="Supprimer la formule"><svg class="w"><text class="serif" x="6" y="13" font-size="13" font-style="italic" fill="#555">f<tspan font-size="10">x</tspan></text><path d="M2 1l6 6M8 1L2 7" stroke="#dc6060" stroke-width="1.800"/></svg></button>
          <button class="on" aria-label="Info section"><svg><use href="#ibeam"/></svg></button>
        </div>
        <div class="grid-frame">
          <table class="grid">
            <colgroup><col class="c0"><col class="cA"><col class="cS"><col class="cS"><col class="cM"><col class="cM"><col class="cS"><col class="cS"><col class="cS"><col></colgroup>
            <thead>
              <tr class="letters"><th rowspan="3" class="corner">Largeur<br>°</th><th class="cur">A</th><th>B</th><th>C</th><th>D</th><th>E</th><th>F</th><th>G</th><th>H</th><th>I</th></tr>
              <tr class="top"><th></th><th colspan="2">Maintiens</th><th colspan="2">Extensions d'élément [mm]</th><th>Largeur</th><th>Épaisseur</th><th>c/t</th><th></th></tr>
              <tr class="bottom"><th>Éléments</th><th>Début</th><th>Fin</th><th>Δ <small>début</small></th><th>Δ <small>fin</small></th><th>b <small>p</small> [mm]</th><th>t [mm]</th><th>b <small>p</small>/t</th><th>Commentaire</th></tr>
            </thead>
            <tbody>
              <tr><th class="cur">1</th><td class="focus">13</td><td><input type="checkbox" aria-label="Début 1" checked></td><td><input type="checkbox" aria-label="Fin 1"></td><td>2.3</td><td>0.0</td><td>18.8</td><td>2.0</td><td>9.397</td><td></td></tr>
              <tr><th>2</th><td>14</td><td><input type="checkbox" aria-label="Début 2" checked></td><td><input type="checkbox" aria-label="Fin 2" checked></td><td>2.8</td><td>2.3</td><td>64.4</td><td>2.0</td><td>32.211</td><td></td></tr>
              <tr><th>3</th><td>15</td><td><input type="checkbox" aria-label="Début 3"></td><td><input type="checkbox" aria-label="Fin 3" checked></td><td>0.0</td><td>2.3</td><td>16.8</td><td>2.0</td><td>8.397</td><td></td></tr>
              <tr><th>4</th><td>16</td><td><input type="checkbox" aria-label="Début 4" checked></td><td><input type="checkbox" aria-label="Fin 4" checked></td><td>2.3</td><td>2.8</td><td>74.8</td><td>2.0</td><td>37.411</td><td></td></tr>
              <tr><th>5</th><td>17</td><td><input type="checkbox" aria-label="Début 5" checked></td><td><input type="checkbox" aria-label="Fin 5" checked></td><td>2.8</td><td>0.9</td><td>18.1</td><td>2.0</td><td>9.043</td><td></td></tr>
              <tr><th>6</th><td>18</td><td><input type="checkbox" aria-label="Début 6" checked></td><td><input type="checkbox" aria-label="Fin 6" checked></td><td>0.9</td><td>0.9</td><td>16.5</td><td>2.0</td><td>8.255</td><td></td></tr>
            </tbody>
          </table>
          <div class="scroll">
            <button aria-label="Défiler vers le haut"><svg class="i10"><path d="M1.500 7L5 3.500 8.500 7" stroke="#555" stroke-width="1.800" fill="none"/></svg></button>
            <div class="thumb"></div>
            <button aria-label="Défiler vers le bas"><svg class="i10"><path d="M1.500 3.500L5 7l3.500-3.500" stroke="#555" stroke-width="1.800" fill="none"/></svg></button>
          </div>
        </div>
        <div class="sheet-tabs" role="tablist">
          <button role="tab">Nœuds</button><button role="tab">Matériaux</button><button role="tab">Sections</button><button role="tab">Éléments</button><button role="tab">Éléments de point</button><button role="tab">Soudures</button><button role="tab" class="active">Largeurs fictives plates | EN 1993-1-3</button><button role="tab">Raidisseurs</button><button role="tab">Panneaux</button>
        </div>
      </section>
    </div>
  </main>

  <footer class="status">
    <span class="msg">Plan de travail</span>
    <div class="toggles">
      <button class="in w39">SAISIE</button><button class="w43">GRILLE</button><button class="in w56">CARTES</button><button class="in w72">SAISIE D'OB.</button><button class="w52">GLIGNES</button><button class="in w28">DXF</button>
    </div>
    <div class="coords"><span class="cs">SC : Global YZ</span><span class="cy">Y:&nbsp; -584.6 mm</span><span class="cz">Z:&nbsp; 62.4 mm</span></div>
    <svg class="resize"><path d="M9 1h2v2H9zM5 5h2v2H5zM9 5h2v2H9zM1 9h2v2H1zM5 9h2v2H5zM9 9h2v2H9z" fill="#7c8088"/></svg>
  </footer>
</div>
</body>
</html>
```
FILE: styles.css
```css
* { box-sizing: border-box; }
html, body { height: 100%; margin: 0; }
body { font: 11px/16px "Noto Sans", "Open Sans", sans-serif; color: #000; overflow: hidden; }
button { font: inherit; color: inherit; background: none; border: 0; padding: 0; margin: 0; }
h1, h2 { font: inherit; margin: 0; white-space: nowrap; }
svg { display: block; flex: none; width: 16px; height: 16px; }
svg text { font-family: "Noto Sans", sans-serif; }
svg text.serif { font-family: "Liberation Serif", serif; }
.defs { position: absolute; width: 0; height: 0; }
.i18 { width: 18px; height: 18px; }
.i11 { width: 11px; height: 11px; }
.i10 { width: 10px; height: 10px; }

.window { display: flex; flex-direction: column; height: 100%; background: #d0d4dd; border: 1px solid #1d7fd2; border-top: 0; }

.titlebar { display: flex; align-items: center; height: 31px; padding-left: 8px; gap: 3px; background: #0078d7; color: #fff; flex: none; }
.titlebar h1 { flex: 1; }
.caption { display: flex; }
.caption button { width: 46px; height: 31px; display: flex; align-items: center; justify-content: center; }

.menubar { display: flex; align-items: center; height: 25px; padding-left: 4px; color: #4a4c52; flex: none; }
.menubar > button { padding: 0 8px 0 7px; }
.menubar .menu-icon { width: 16px; height: 14px; margin: 0 3px; }
.mdi { display: flex; gap: 6px; margin-left: auto; padding: 5px 4px 0 0; }
.grip { width: 3px; height: 16px; flex: none; background: repeating-linear-gradient(#b4b9c4 0 2px, #fff 2px 3px, transparent 3px 5px); }

.bars { flex: none; display: flex; flex-direction: column; gap: 1px; padding-left: 1px; height: 52px; }
.bar-row { display: flex; gap: 2px; }
.bar { display: flex; align-items: center; height: 25px; padding-right: 1px; border-radius: 3px; background: linear-gradient(#edf1f9, #e2e7f0 45%, #cfd4de); border-bottom: 1px solid #a3a7b2; }
.bar .grip { margin: 0 3px; }
.bar > button { width: 22px; height: 24px; flex: none; display: flex; align-items: center; justify-content: center; }
.bar > button:disabled svg { opacity: .45; }
.bar > button.on { height: 22px; border: 1px solid #b59b6c; border-radius: 2px; background: linear-gradient(#fcd8a8, #ffc069 55%, #ffe08c); }
.bar > button.split { width: 24px; }
.bar > button.drop { width: 11px; }
.drop::after { content: ""; border: 3px solid transparent; border-top-color: #777; border-bottom: 0; }
.bar svg.w { width: 18px; }
.sep { width: 1px; height: 14px; margin: 0 4px 0 3px; flex: none; background: #b0b5c1; box-shadow: 1px 0 #fff; }
.bar select { appearance: none; width: 153px; height: 19px; margin: 0 2px; border: 1px solid #a2a4a8; border-radius: 0; background: linear-gradient(#777, #777) no-repeat right 7px top 7px / 1px 3px, linear-gradient(#777, #777) no-repeat right 6px top 7px / 3px 2px, linear-gradient(#777, #777) no-repeat right 5px top 7px / 5px 1px, #efefef; }

.work { flex: 1; min-height: 0; display: flex; gap: 4px; }
.navigator { width: 285px; flex: none; display: flex; flex-direction: column; background: #e3e8f1; }
.pane-head { display: flex; align-items: center; gap: 7px; height: 19px; padding: 0 5px 0 4px; flex: none; color: #4a4c52; background: #e6eaf3; border-bottom: 1px solid #a6abb6; }
.pane-head h2 { flex: 1; }
.tree { flex: 1; margin: 3px 1px 0 2px; border: 1px solid #8f939c; border-right-color: #fff; background: #fcfbf4; overflow: hidden; padding-left: 4px; }
.tree ul { list-style: none; margin: 0; padding: 0; }
.tree li { position: relative; }
.tree li ul { margin-left: 19px; }
.tree li::before { content: ""; position: absolute; left: 8px; top: 0; bottom: 0; border-left: 1px dotted #808080; }
.tree li:last-child::before { bottom: auto; height: 10px; }
.node { position: relative; display: flex; align-items: center; height: 18px; padding-left: 19px; gap: 4px; white-space: nowrap; }
.node::before { content: ""; position: absolute; left: 9px; top: 10px; width: 9px; border-top: 1px dotted #808080; }
.node.root { padding-left: 0; }
.node.root svg { height: 14px; }
.node.root::before { display: none; }
.node span, .node strong { padding: 0 1px; }
.node .sel { background: #0078d7; color: #fff; outline: 1px dotted #e08030; outline-offset: -1px; }
.box { position: absolute; left: 4px; top: 6px; width: 9px; height: 9px; border: 1px solid #959595; border-radius: 1px; background: linear-gradient(#3a52a8, #3a52a8) center / 5px 1px no-repeat, #fff; }
.box.plus { background: linear-gradient(#3a52a8, #3a52a8) center / 5px 1px no-repeat, linear-gradient(#3a52a8, #3a52a8) center / 1px 5px no-repeat, #fff; }
.nav-tabs { display: flex; height: 24px; padding: 0 2px; gap: 4px; background: #d0d4dd; color: #4a4c52; flex: none; border-top: 1px solid #8f939c; }
.nav-tabs button { display: flex; align-items: center; gap: 2px; height: 20px; padding: 0 3px; }
.nav-tabs .active { background: #f3f6fb; border: 1px solid #b4d8de; border-top: 0; border-radius: 0 0 3px 3px; }

.right { flex: 1; min-width: 0; display: flex; flex-direction: column; gap: 5px; }
.canvas { flex: 1; min-height: 0; background: #fff; border: 1px solid #6a6a6a; border-width: 1px 1px 1px 2px; border-right-color: #d8d8d8; border-bottom-color: #c8c8cc; }
.drawing { width: 100%; height: 100%; }
.drawing text { font: 9px "DejaVu Sans", sans-serif; }
.ay { fill: #00e000; }
.az { fill: #0000ff; }

.tables { flex: none; background: #f0f0f0; height: 239px; }
.pane-head.gray { height: 20px; background: #b9c0ca; border: 0; padding: 0 5px 0 4px; }
.bar.wide { height: 25px; border-radius: 0; padding-left: 9px; border-bottom: 0; }
.grid-frame { display: flex; padding: 2px 2px 10px 2px; border: 1px solid #6e6e6e; }
.grid { flex: 1; width: 100%; table-layout: fixed; border-collapse: collapse; font: 11px/14px Roboto, Arial, sans-serif; }
.c0 { width: 45px; } .cA { width: 192px; } .cS { width: 60px; } .cM { width: 72px; }
.grid th { font-weight: 400; padding: 0; background: #f0f0f0; border: 1px solid #a0a0a0; text-align: center; white-space: nowrap; }
.grid .letters th { height: 15px; line-height: 13px; background: #e1e1e1; border-color: #696969; }
.grid .letters .corner { line-height: 12px; padding-top: 1px; }
.grid .letters th.cur, .grid tbody th.cur { background: #0078d7; color: #fff; }
.grid .top th { height: 15px; border-bottom: 0; }
.grid .bottom th { height: 16px; border-top: 0; line-height: 14px; }
.grid small { font-size: 10px; line-height: 10px; vertical-align: -1px; }
.grid td { height: 16px; padding: 0 4px; background: #fff; border: 1px solid #a0a0a0; text-align: right; }
.grid tbody th { background: #e1e1e1; border-color: #696969; box-shadow: inset 1px 1px #fff; }
.grid td:nth-child(2) { text-align: left; }
.grid td:nth-child(3), .grid td:nth-child(4) { text-align: center; }
.grid td:nth-child(7), .grid td:nth-child(9) { background: #f0f0f0; }
.grid .focus { outline: 1px dotted #000; outline-offset: -1px; }
.grid input { appearance: none; display: block; width: 11px; height: 11px; margin: 1px auto; border: 1px solid #000; background: #fff; box-shadow: 1px 1px #000; }
.grid input:checked::after { content: ""; display: block; width: 7px; height: 7px; margin: 1px; background: #000; clip-path: polygon(0 35%, 40% 65%, 100% 0, 100% 35%, 40% 100%, 0 70%); }
.scroll { width: 17px; flex: none; display: flex; flex-direction: column; background: #f0f0f0; margin-left: 1px; border-right: 1px solid #a0a0a0; }
.scroll button { height: 17px; display: flex; align-items: center; justify-content: center; }
.thumb { height: 51px; background: #cdcdcd; margin-bottom: auto; }

.sheet-tabs { display: flex; font: 11px/14px Roboto, Arial, sans-serif; border-bottom: 1px solid #d6d6d6; }
.sheet-tabs button { height: 16px; padding: 0 4px 0 3px; margin-right: -1px; background: #e1e1e1; border: 1px solid #555; border-top: 0; border-radius: 0 0 4px 4px; white-space: nowrap; }
.sheet-tabs .active { background: #f0f0f0; padding: 0 4px; }

.status { display: flex; align-items: center; height: 20px; flex: none; padding-left: 4px; font: 11px/16px Roboto, Arial, sans-serif; color: #26282e; background: linear-gradient(#d4d7dd, #a9afb9 50%, #c0c4cc); border-top: 1px solid #9a9da5; }
.msg { flex: 1; }
.toggles { display: flex; gap: 1px; padding-right: 88px; }
.toggles button { height: 18px; white-space: nowrap; padding-bottom: 2px; border: 1px solid; border-color: #e4e6ea #9a9ea6 #9a9ea6 #e4e6ea; }
.toggles .in { padding-bottom: 0; border-color: #222 #e4e6ea #e4e6ea #222; }
.w28 { width: 28px; } .w39 { width: 40px; } .w43 { width: 43px; } .w52 { width: 52px; } .w56 { width: 56px; } .w72 { width: 72px; }
.coords { display: flex; white-space: nowrap; }
.coords span { border-right: 1px solid #8f939b; margin-right: 2px; }
.cs { width: 67px; overflow: hidden; }
.cy { width: 74px; }
.coords .cz { width: 74px; border: 0; }
.resize { width: 12px; height: 12px; align-self: flex-end; }
```
